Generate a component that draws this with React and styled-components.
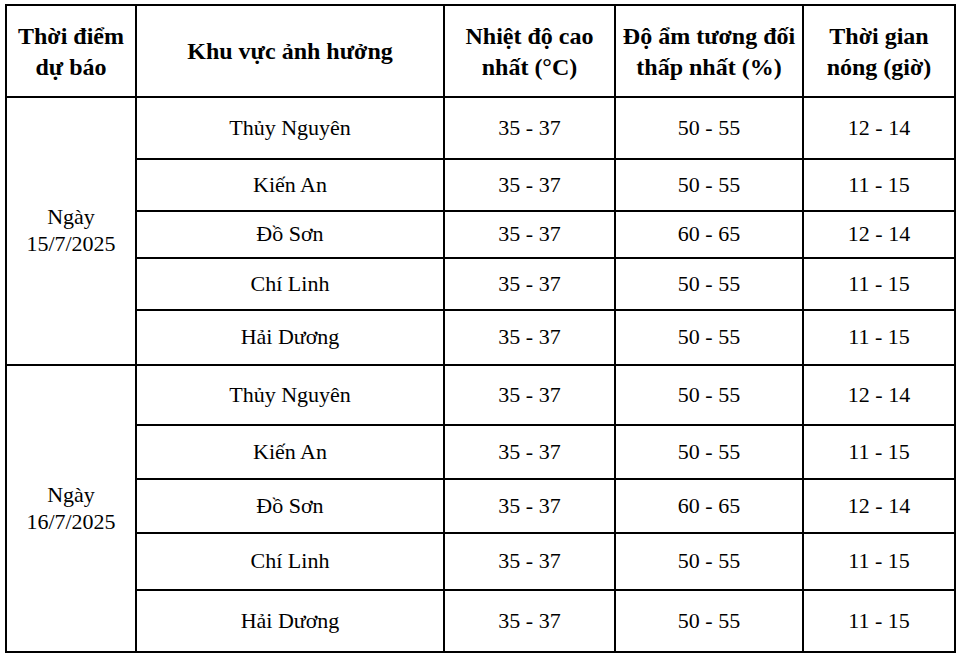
import React from "react";
import styled, { createGlobalStyle } from "styled-components";

const Global = createGlobalStyle`
  html, body { margin: 0; padding: 0; background: #fff; }
  body { font-family: "Liberation Serif", "Times New Roman", serif; color: #000; }
`;

const Page = styled.div`
  padding: 4px 0 0 5px;
`;

const Table = styled.table`
  border-collapse: collapse;
  table-layout: fixed;
  width: 951px;
`;

const Col = styled.col`
  width: ${(p) => p.$w}px;
`;

const HeadCell = styled.th`
  border: 2px solid #000;
  padding: 1px 0 0;
  height: 89px;
  font-weight: bold;
  font-size: 24px;
  line-height: 31px;
  text-align: center;
  vertical-align: middle;
`;

const Row = styled.tr`
  height: ${(p) => p.$h}px;
`;

const Cell = styled.td`
  border: 2px solid #000;
  padding: 0 0 2px;
  font-size: 22px;
  line-height: 27px;
  text-align: center;
  vertical-align: middle;
`;

const groups = [
  {
    date: "15/7/2025",
    rows: [
      ["Thủy Nguyên", "35 - 37", "50 - 55", "12 - 14", 62],
      ["Kiến An", "35 - 37", "50 - 55", "11 - 15", 52],
      ["Đồ Sơn", "35 - 37", "60 - 65", "12 - 14", 47],
      ["Chí Linh", "35 - 37", "50 - 55", "11 - 15", 52],
      ["Hải Dương", "35 - 37", "50 - 55", "11 - 15", 55],
    ],
  },
  {
    date: "16/7/2025",
    rows: [
      ["Thủy Nguyên", "35 - 37", "50 - 55", "12 - 14", 60],
      ["Kiến An", "35 - 37", "50 - 55", "11 - 15", 54],
      ["Đồ Sơn", "35 - 37", "60 - 65", "12 - 14", 54],
      ["Chí Linh", "35 - 37", "50 - 55", "11 - 15", 57],
      ["Hải Dương", "35 - 37", "50 - 55", "11 - 15", 62],
    ],
  },
];

export default function App() {
  return (
    <Page>
      <Global />
      <Table>
        <colgroup>
          <Col $w={130} />
          <Col $w={308} />
          <Col $w={171} />
          <Col $w={188} />
          <Col $w={152} />
        </colgroup>
        <thead>
          <tr>
            <HeadCell>
              Thời điểm
              <br />
              dự báo
            </HeadCell>
            <HeadCell>Khu vực ảnh hưởng</HeadCell>
            <HeadCell>
              Nhiệt độ cao
              <br />
              nhất (°C)
            </HeadCell>
            <HeadCell>
              Độ ẩm tương đối
              <br />
              thấp nhất (%)
            </HeadCell>
            <HeadCell>
              Thời gian
              <br />
              nóng (giờ)
            </HeadCell>
          </tr>
        </thead>
        <tbody>
          {groups.map((g) =>
            g.rows.map((r, i) => (
              <Row key={g.date + i} $h={r[4]}>
                {i === 0 && (
                  <Cell rowSpan={g.rows.length}>
                    Ngày
                    <br />
                    {g.date}
                  </Cell>
                )}
                <Cell>{r[0]}</Cell>
                <Cell>{r[1]}</Cell>
                <Cell>{r[2]}</Cell>
                <Cell>{r[3]}</Cell>
              </Row>
            ))
          )}
        </tbody>
      </Table>
    </Page>
  );
}
